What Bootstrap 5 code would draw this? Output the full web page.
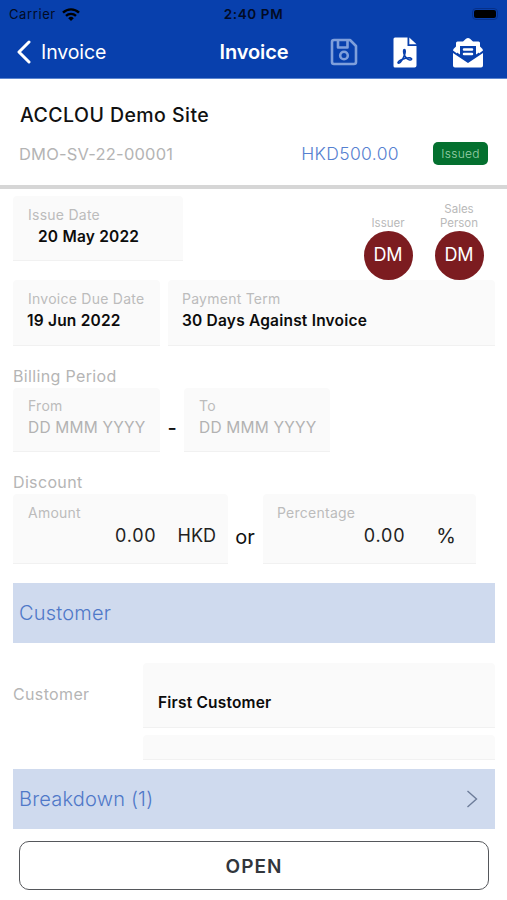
<!DOCTYPE html>
<html lang="en">
<head>
<meta charset="utf-8">
<meta name="viewport" content="width=device-width, initial-scale=1">
<title>Invoice</title>
<link rel="stylesheet" href="https://cdn.jsdelivr.net/npm/bootstrap@5.3.0/dist/css/bootstrap.min.css">
<style>
body{font-family:Inter,"Liberation Sans",sans-serif;font-size:14px;line-height:20px;color:#111;background:#fff;height:900px;overflow:hidden}
span{white-space:nowrap}
.topbar{background:#0840ad;height:79px;border-bottom:1px solid #5b85cf}
.status-row{height:28px;color:#020b24;display:grid;grid-template-columns:1fr auto 1fr;padding:0 9px}
.carrier{font-size:13px;letter-spacing:.6px}
.clock{font-size:13.5px;font-weight:600;letter-spacing:.6px}
.battery{width:26px;height:12px;border:1px solid #06308a;border-radius:4px;padding:1px}
.battery div{background:#000;height:8px;border-radius:2px}
.nav-row{height:48px;display:grid;grid-template-columns:1fr auto 1fr;padding:0 23px 0 16px;color:#fff}
.back{font-size:19.5px;letter-spacing:-.1px}
.ttl{font-size:20px;font-weight:600;letter-spacing:-.1px;padding-left:8px}
.summary{height:109.5px;border-bottom:4px solid #d6d6d6;padding:24px 19px 0}
.site{font-size:19.5px;font-weight:500;line-height:24px;padding-left:1px;letter-spacing:.45px}
.docno{font-size:16.5px;color:#b4b4b4;letter-spacing:.2px}
.amount{font-size:17.5px;font-weight:300;color:#5580d0;margin-right:34px;letter-spacing:.35px}
.issued{width:55px;height:23px;border-radius:5px;background:#04702f;color:#9bd0ab;font-size:12px;font-weight:300;letter-spacing:.3px}
.main-area{padding:7.5px 12px 0 13px}
.field{background:#fafafa;border-bottom:1px solid #f1f1f1;border-radius:4px 4px 0 0;padding:9px 15px 0}
.cap{color:#bcbcbc;display:block;letter-spacing:.25px}
.val{display:block;font-size:15.5px;font-weight:600;color:#0c0c0c;line-height:22px;letter-spacing:.2px;padding-top:1px}
.ghost{display:block;font-size:15.5px;color:#b2b2b2;line-height:22px;letter-spacing:.2px;padding-top:1px}
.sect{color:#b5b5b5;font-size:16px;letter-spacing:.35px;display:block}
.who{width:50px;color:#b9b9b9;font-size:11.5px;line-height:14.5px;text-align:center}
.disc{width:49px;height:49px;border-radius:50%;background:#7c1c20;color:#fff;font-size:18px}
.num{font-size:18px;color:#222;text-align:right;letter-spacing:.8px}
.unit{font-size:18px;color:#222}
.panel-bar{height:60px;background:#cfdaee;color:#4f78c8;font-size:20px;font-weight:300;padding:0 17px 0 6px;letter-spacing:.2px}
.btn.open-btn{height:49px;border:1.5px solid #55575b;border-radius:10px;margin:12px 6px 0;color:#32363c;font-size:19px;font-weight:600;background:#fff;padding:4px 0 0;letter-spacing:1px}
</style>
</head>
<body>
<header class="topbar">
  <div class="status-row align-items-center">
    <div class="d-flex align-items-center"><span class="carrier">Carrier</span>
      <svg style="margin-left:6px" width="18" height="13" viewBox="0 0 18 13" fill="none" stroke="#000" stroke-width="2.4"><path d="M1 4.6a11.5 11.5 0 0 1 16 0M4 7.9a7.2 7.2 0 0 1 10 0"/><path d="M6.2 10.2a4 4 0 0 1 5.600 0L9 13z" fill="#000" stroke="none"/></svg>
    </div>
    <span class="clock">2:40 PM</span>
    <div class="d-flex justify-content-end"><div class="battery"><div></div></div></div>
  </div>
  <nav class="nav-row align-items-center">
    <div class="d-flex align-items-center gap-2"><svg width="17" height="24" viewBox="0 0 17 24" fill="none" stroke="#fff" stroke-width="3" stroke-linecap="round" stroke-linejoin="round"><path d="M13 2 3 12l10 10"/></svg><span class="back">Invoice</span></div>
    <span class="ttl">Invoice</span>
    <div class="d-flex align-items-center justify-content-end">
      <svg width="28" height="28" viewBox="0 0 28 28" fill="none" stroke="#7f9fdb" stroke-width="2.6" stroke-linejoin="round"><path d="M4 2h16l6 6v16a2 2 0 0 1-2 2H4a2 2 0 0 1-2-2V4a2 2 0 0 1 2-2z"/><path d="M8 2v7.500h9.500V2"/><circle cx="14" cy="17.500" r="3.800"/></svg>
      <svg style="margin-left:35px" width="24" height="31" viewBox="0 0 24 31"><path fill="#fff" d="M2 .5h12.500V9H23.500v19.500a2 2 0 0 1-2 2H2a1.500 1.500 0 0 1-1.500-1.500V2A1.500 1.500 0 0 1 2 .5z"/><path fill="#fff" d="M16.300.5 23.500 7.300h-7.200z"/><path d="M11.300 12.500c1.300 0 1 2.500.5 4.500-1 3.500-4 9-6 9.300-1.600 0-.8-2 2.500-3.500 3-1.300 7-2.300 9-1.900 2.600.7 1 2.700-1.100 1.900-2.200-.9-4.700-3.900-5.300-6.300-.4-2-.5-4 .4-4z" fill="none" stroke="#0840ad" stroke-width="1.600"/></svg>
      <svg style="margin-left:35px" width="32" height="31" viewBox="0 0 32 31"><path fill="#fff" d="M1 16 16 26l15-10v12.500a2 2 0 0 1-2 2H3a2 2 0 0 1-2-2z"/><path fill="#fff" d="M1 13.500Q1.500 11.500 4 9.500V6q0-1.500 1.500-1.500H11L14 1.800q2-1.500 4 0l3 2.700h5.500Q28 4.500 28 6v3.500q2.500 2 3 4L27 16.400V8.500q0-1-1-1H6q-1 0-1 1v7.900z"/><path fill="#0840ad" d="M7 7.500h18v10.200L16 24l-9-6.300z"/><path fill="#fff" d="M5 6h22v3H5zM5 6h3v11.500l-3-2zM24 6h3v9.500l-3 2z"/><path stroke="#fff" stroke-width="2.500" stroke-linecap="round" d="M12 12.500h8M12 17h8"/></svg>
    </div>
  </nav>
</header>

<section class="summary">
  <span class="site d-block">ACCLOU Demo Site</span>
  <div class="d-flex align-items-center" style="margin-top:15px">
    <span class="docno me-auto">DMO-SV-22-00001</span>
    <span class="amount">HKD500.00</span>
    <div class="issued d-flex align-items-center justify-content-center"><span>Issued</span></div>
  </div>
</section>

<main class="main-area">
  <div class="d-flex" style="height:84px">
    <div class="field me-auto" style="width:170px;height:65px"><span class="cap">Issue Date</span><span class="val" style="padding-left:10px">20 May 2022</span></div>
    <div class="who d-flex flex-column align-items-center" style="margin-right:21px;padding-top:20px"><span>Issuer</span><div class="disc d-flex align-items-center justify-content-center flex-shrink-0">DM</div></div>
    <div class="who d-flex flex-column align-items-center" style="margin-right:11px;padding-top:5.500px"><span>Sales</span><span>Person</span><div class="disc d-flex align-items-center justify-content-center flex-shrink-0">DM</div></div>
  </div>
  <div class="d-flex gap-2">
    <div class="field" style="width:147px;height:66px"><span class="cap">Invoice Due Date</span><span class="val" style="margin-left:-1px">19 Jun 2022</span></div>
    <div class="field flex-grow-1" style="height:66px;padding-left:14px"><span class="cap">Payment Term</span><span class="val">30 Days Against Invoice</span></div>
  </div>
  <span class="sect" style="margin-top:20px;height:22px">Billing Period</span>
  <div class="d-flex">
    <div class="field" style="width:147px;height:64px;padding-top:8px"><span class="cap">From</span><span class="ghost">DD MMM YYYY</span></div>
    <div class="text-center" style="width:24px;font-size:20px;font-weight:500;padding-top:30px">-</div>
    <div class="field" style="width:146px;height:64px;padding-top:8px"><span class="cap">To</span><span class="ghost">DD MMM YYYY</span></div>
  </div>
  <span class="sect" style="margin-top:20px;height:22px">Discount</span>
  <div class="d-flex">
    <div class="field" style="width:215px;height:70px;padding-right:12px"><span class="cap">Amount</span><div class="d-flex justify-content-end" style="gap:21px;padding-top:3px"><span class="num">0.00</span><span class="unit">HKD</span></div></div>
    <div class="text-center" style="width:34px;font-size:20px;padding-top:33px">or</div>
    <div class="field" style="width:213px;height:70px;margin-left:1px;padding-left:14px;padding-right:20px"><span class="cap">Percentage</span><div class="d-flex justify-content-end" style="gap:31px;padding-top:3px"><span class="num">0.00</span><span class="unit" style="font-size:20px">%</span></div></div>
  </div>
  <div class="panel-bar d-flex align-items-center" style="margin-top:19px">Customer</div>
  <div class="d-flex" style="margin-top:20px">
    <span class="sect" style="width:130px;padding-top:21px">Customer</span>
    <div class="flex-grow-1">
      <div class="field" style="height:65px;padding-top:28px"><span class="val">First Customer</span></div>
      <div class="field" style="height:25px;margin-top:7px"></div>
    </div>
  </div>
  <div class="panel-bar d-flex align-items-center justify-content-between" style="margin-top:9px"><span>Breakdown (1)</span><svg width="12" height="18" viewBox="0 0 12 18" fill="none" stroke="#6d7c99" stroke-width="1.400"><path d="m1.500 1 9 8-9 8"/></svg></div>
  <div class="d-grid"><button class="btn open-btn" type="button">OPEN</button></div>
</main>
<script src="https://cdn.jsdelivr.net/npm/bootstrap@5.3.0/dist/js/bootstrap.bundle.min.js"></script>
</body>
</html>
